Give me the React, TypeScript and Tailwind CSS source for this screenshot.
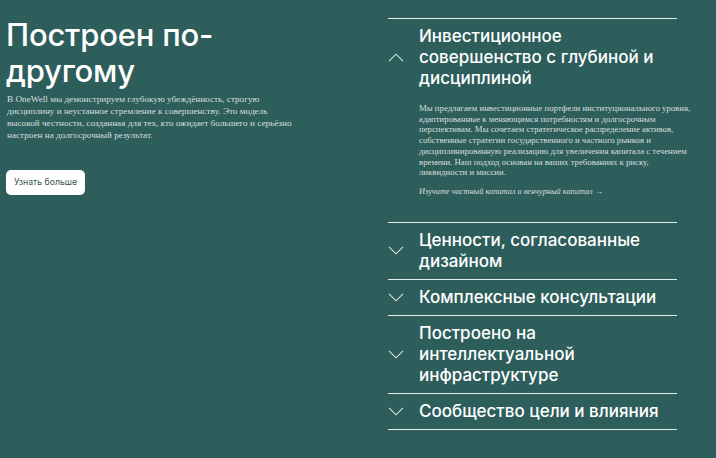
import React from "react";

const Chevron = ({ up }: { up?: boolean }) => (
  <svg width="16" height="9" viewBox="0 0 16 9" fill="none" className="shrink-0">
    <path
      d={up ? "M1 8.2 L8 1.2 L15 8.2" : "M1 0.8 L8 7.8 L15 0.8"}
      stroke="#dfe7e6"
      strokeWidth="1.1"
    />
  </svg>
);

const Row = ({ lines, up }: { lines: string[]; up?: boolean }) => (
  <div className="flex items-center gap-[15px] py-[7px]">
    <Chevron up={up} />
    <div className="text-[17px] leading-[21px] font-medium text-white whitespace-nowrap">
      {lines.map((l, i) => (
        <div key={i}>{l}</div>
      ))}
    </div>
  </div>
);

export default function App() {
  const leftPara = [
    "В OneWell мы демонстрируем глубокую убеждённость, строгую",
    "дисциплину и неустанное стремление к совершенству. Это модель",
    "высокой честности, созданная для тех, кто ожидает большего и серьёзно",
    "настроен на долгосрочный результат.",
  ];
  const rightPara = [
    "Мы предлагаем инвестиционные портфели институционального уровня,",
    "адаптированные к меняющимся потребностям и долгосрочным",
    "перспективам. Мы сочетаем стратегическое распределение активов,",
    "собственные стратегии государственного и частного рынков и",
    "дисциплинированную реализацию для увеличения капитала с течением",
    "времени. Наш подход основан на ваших требованиях к риску,",
    "ликвидности и миссии.",
  ];
  return (
    <div
      className="w-[716px] h-[458px] bg-[#2d5e5b] flex overflow-hidden"
      style={{ fontFamily: "Inter, 'Liberation Sans', sans-serif" }}
    >
      <div className="w-[388px] pl-[6px] pt-[17px]">
        <h1 className="text-[31px] leading-[36px] font-medium text-white tracking-[-0.2px]">
          Построен по-
          <br />
          другому
        </h1>
        <div
          className="mt-[4px] text-[9.2px] leading-[12px] text-[#d6dfde] whitespace-nowrap pl-[1px]"
          style={{ fontFamily: "'Liberation Serif', serif" }}
        >
          {leftPara.map((l, i) => (
            <div key={i}>{l}</div>
          ))}
        </div>
        <button className="mt-[29px] w-[79px] h-[25px] rounded-[5px] bg-white text-[#3b5352] text-[8.7px] flex items-center justify-center">
          Узнать больше
        </button>
      </div>
      <div className="w-[289px] pt-[18px]">
        <div className="border-t border-[#e6eded]">
          <Row up lines={["Инвестиционное", "совершенство с глубиной и", "дисциплиной"]} />
          <div
            className="pl-[31px] pt-[7px] pb-[24px] text-[#d6dfde]"
            style={{ fontFamily: "'Liberation Serif', serif" }}
          >
            <div className="text-[8.75px] leading-[10.7px] whitespace-nowrap">
              {rightPara.map((l, i) => (
                <div key={i}>{l}</div>
              ))}
            </div>
            <div className="mt-[9px] text-[8.3px] leading-[10.7px] italic">
              Изучите частный капитал и венчурный капитал →
            </div>
          </div>
        </div>
        <div className="border-t border-[#e6eded]">
          <Row lines={["Ценности, согласованные", "дизайном"]} />
        </div>
        <div className="border-t border-[#e6eded]">
          <Row lines={["Комплексные консультации"]} />
        </div>
        <div className="border-t border-[#e6eded]">
          <Row lines={["Построено на", "интеллектуальной", "инфраструктуре"]} />
        </div>
        <div className="border-t border-b border-[#e6eded]">
          <Row lines={["Сообщество цели и влияния"]} />
        </div>
      </div>
    </div>
  );
}
